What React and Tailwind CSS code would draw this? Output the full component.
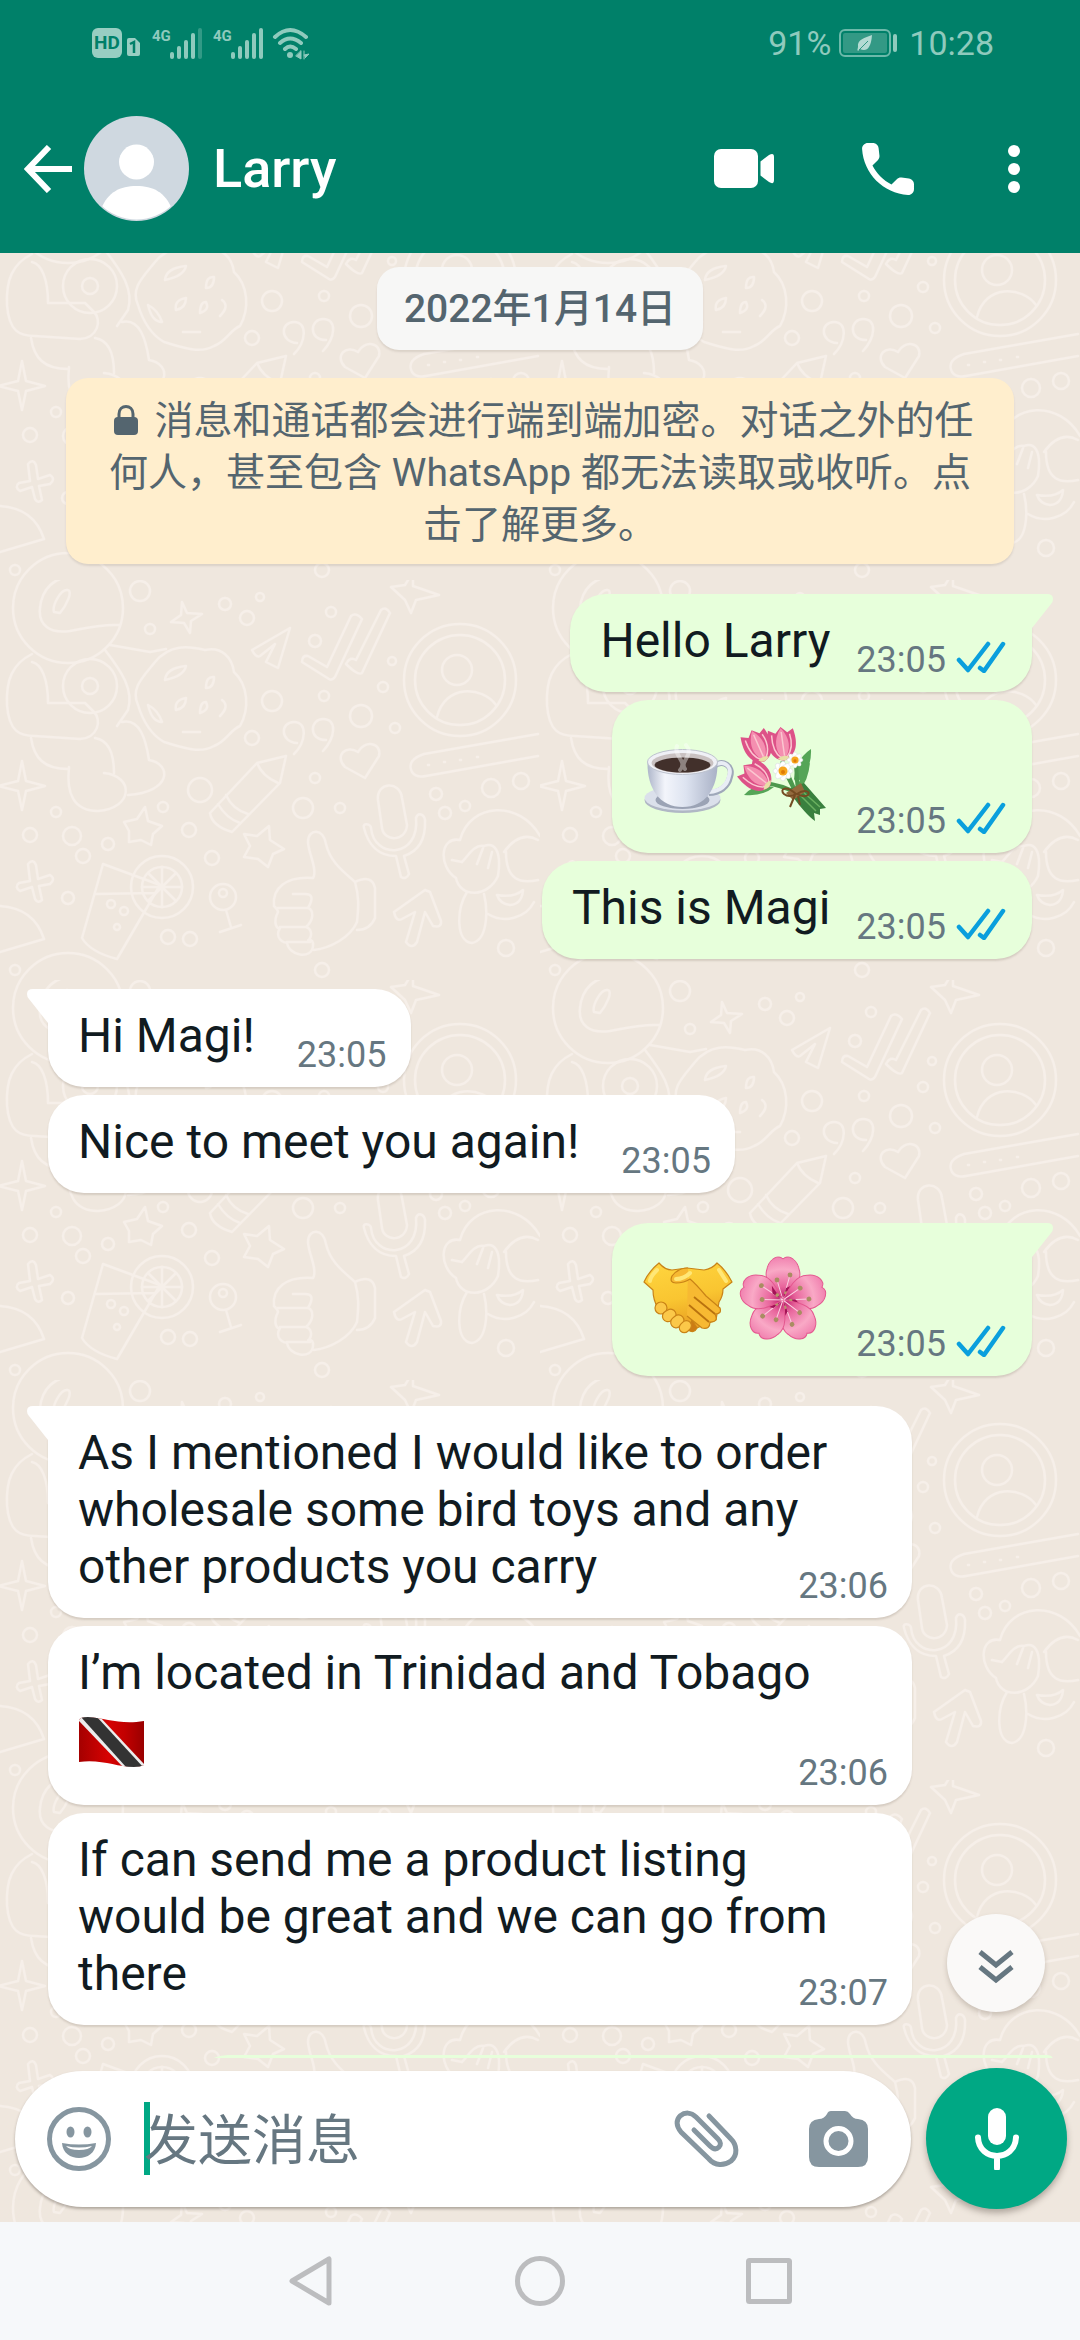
import React from 'react';

const DOTS = [
  [140, 11, 10], [150, 49, 5], [225, 24, 6], [247, 38, 7], [260, 17, 4], [331, 32, 5], [315, 61, 6],
  [392, 81, 4], [272, 121, 10], [324, 116, 5], [383, 107, 5], [361, 136, 11], [252, 158, 7],
  [395, 148, 5], [200, 210, 12], [315, 198, 5], [303, 228, 10], [340, 228, 5], [163, 227, 5],
  [56, 232, 5], [30, 255, 7], [72, 256, 9], [83, 276, 7], [108, 264, 6], [189, 250, 7],
  [212, 278, 7], [68, 318, 6], [168, 357, 7], [190, 359, 7], [436, 214, 6], [445, 233, 6],
  [491, 208, 9], [521, 201, 8], [465, 226, 5], [506, 368, 8], [322, 390, 7], [15, 390, 5],
];

// Faint line drawings behind the conversation
const Wallpaper = () => (
  <svg className="absolute inset-0 w-full h-full" aria-hidden="true">
    <defs>
      <pattern id="doodles" x="0" y="327" width="540" height="400" patternUnits="userSpaceOnUse">
        <g fill="none" stroke="#f6efe9" strokeWidth="2.5" strokeLinecap="round" strokeLinejoin="round">
          {DOTS.map(([x, y, r]) => (
            <circle key={`${x}-${y}`} cx={x} cy={y} r={r} />
          ))}
          {/* astronaut */}
          <circle cx="68" cy="28" r="55" />
          <circle cx="68" cy="428" r="55" />
          <path d="M120 45C100 44 85 48 70 51C50 54 38 45 40 28C42 8 55 -3 72 -3M54 32C52 26 60 10 67 10C74 10 66 26 60 33Z" />
          <path d="M32 74C12 84 6 100 7 125C9 152 20 156 35 156L80 159C98 158 102 140 94 132L85 123L48 123C48 100 42 84 32 82" />
          <circle cx="90" cy="106" r="27" />
          <circle cx="90" cy="106" r="8" />
          <path d="M105 70C122 92 134 110 128 130L117 146M31 158C34 178 44 189 68 189M95 158C108 160 114 172 114 193M122 142C140 138 146 160 149 180C172 184 172 212 128 215M69 187C66 214 74 231 98 231C134 228 134 196 104 193M110 65L150 72L166 69" />
          {/* cookie */}
          <path d="M155 82C170 64 188 66 205 70C222 66 232 78 234 92C248 105 250 128 240 146C230 150 226 162 214 166C200 174 184 168 164 162C150 154 142 138 138 125C130 108 144 96 155 82Z" />
          <path d="M165 100Q166 88 186 86Q184 96 165 100M176 130Q174 120 186 118Q186 128 176 130M200 133Q200 122 206 122Q210 130 200 133M206 108Q206 96 214 97Q214 108 206 108M183 152H200M148 125Q158 130 162 142Q152 142 148 125M222 120Q230 126 220 136" />
          <path d="M182 22L187 33L202 34L191 41L190 53L184 43L171 42L181 35Z" />
          <path d="M413 -8L413 6L439 15L416 20L411 33L405 20L391 7L405 5Z" />
          {/* paper plane and ticks */}
          <path d="M290 48L252 70Q256 78 260 76L275 64L266 82L278 88Z" />
          <path d="M302 82Q302 75 308 76L327 87L351 36Q356 32 362 39L335 97Q332 101 329 99ZM346 84Q350 76 356 80L381 30Q386 26 390 33L362 93Q358 96 346 84" />
          {/* contact */}
          <circle cx="460" cy="100" r="56" />
          <circle cx="460" cy="100" r="45" />
          <circle cx="457" cy="90" r="15" />
          <path d="M437 137C445 104 482 106 496 125" />
          <path d="M294 174C306 162 308 142 294 142C280 142 280 162 297 163M323 171C335 158 338 139 323 139C310 139 308 160 326 160" />
          <path d="M365 198L345 187C334 176 346 164 358 172C364 160 382 162 379 176Z" />
          <path d="M286 176L257 183L210 233Q212 246 232 252L280 203ZM257 183Q262 196 278 203M226 215Q232 229 248 234M218 224Q226 238 240 243" />
          <path d="M538 154L424 174Q406 180 412 192Q416 198 426 196L538 176M428 185h1M444 182h1M460 180h1M477 177h1" />
          {/* microphone */}
          <path d="M378 220C376 202 400 200 402 218L407 245C406 262 384 262 382 248ZM364 248C362 242 371 244 371 248C374 280 420 278 416 238C418 232 424 234 425 240C426 262 416 272 404 276L409 294Q406 300 401 297L396 276C378 276 368 264 364 248Z" />
          <path d="M145 227L148 241L162 246L153 254L151 265L141 260L129 262L129 251L124 242L137 239ZM269 246L270 260L284 269L273 274L268 287L258 279L244 277L250 266L244 254L257 256Z" />
          <path d="M22 181L26 201L45 206L26 211L22 230L18 211L-2 206L18 201Z" />
          <path d="M28 284Q33 278 36 285L38 299L50 295Q56 299 50 304L39 306L42 320Q38 324 35 319L32 307L20 311Q14 307 19 303L30 301Z" />
          {/* drink */}
          <path d="M103 284L160 305L117 379Q90 372 82 358ZM95 314L155 313" />
          <circle cx="162" cy="307" r="31" />
          <circle cx="162" cy="307" r="20" />
          <path d="M162 287V327M142 307H182M148 293L176 321M176 293L148 321" />
          <circle cx="111" cy="324" r="4" />
          <circle cx="124" cy="331" r="4" />
          <circle cx="117" cy="347" r="3" />
          <circle cx="223" cy="317" r="13" />
          <circle cx="223" cy="313" r="4" />
          <path d="M226 330L231 347M220 352L241 345" />
          {/* thumb up */}
          <path d="M313 298C318 290 308 272 308 262C308 248 324 248 326 264C330 282 344 292 355 302C360 320 358 330 357 342C350 358 330 368 314 370M313 298C286 296 272 308 274 326Q278 330 278 332C272 344 278 350 280 348C274 358 284 364 287 362C288 376 312 380 313 366C314 360 308 358 308 361C314 354 310 348 306 347C314 340 314 330 308 328C314 318 312 314 305 314H293M278 328H308M280 347H306M287 362H310M355 302Q372 294 375 308V338Q370 350 357 350" />
          <path d="M425 310L394 332Q396 342 402 339L415 332L406 362Q412 370 417 362L425 332L433 346Q442 348 441 341L430 312Z" />
          {/* monkey */}
          <path d="M460 260C470 222 520 220 540 256M460 260C440 256 438 286 456 298C460 318 488 318 498 296C502 270 494 262 484 266C474 264 468 276 462 282L452 280M506 272C506 300 520 304 538 300M504 272Q520 250 538 260M467 312C456 330 456 362 472 363C488 360 488 330 484 314M488 334C504 344 526 338 534 322M497 315Q514 318 523 310Q522 324 510 325Q500 324 497 315M483 268L477 284M492 272L488 288" />
          <path d="M0 326Q34 328 44 359L0 372" />
        </g>
      </pattern>
    </defs>
    <rect width="100%" height="100%" fill="url(#doodles)" />
  </svg>
);

const SignalBars = ({ weak }) => (
  <div className="flex h-[34px] items-start">
    <span className="w-[18px] text-[15px] font-bold leading-5">4G</span>
    <svg width="33" height="34" viewBox="0 0 33 34" fill="currentColor">
      <rect y="26" width="4" height="7" rx="2" />
      <rect x="7" y="20" width="4" height="13" rx="2" />
      <rect x="14" y="14" width="4" height="19" rx="2" />
      <rect x="21" y="7" width="4" height="26" rx="2" />
      <rect x="28" y="2" width="4" height="31" rx="2" opacity={weak ? 0.35 : 1} />
    </svg>
  </div>
);

const StatusBar = () => (
  <div className="flex h-[86px] items-center justify-between pl-[92px] pr-[86px] text-[#8fcabd]">
    <div className="flex items-center">
      <span className="flex h-[30px] w-[30px] items-center justify-center rounded-md bg-[#98cec2] text-[19px] font-bold text-[#008069]">
        HD
      </span>
      <svg className="ml-1 mt-2" width="14" height="20" viewBox="0 0 14 20">
        <path d="M3 1H9L14 6V17Q14 19 12 19H3Q1 19 1 17V3Q1 1 3 1Z" fill="#98cec2" />
        <path d="M4 7L8 5V16" fill="none" stroke="#008069" strokeWidth="2.5" />
      </svg>
      <div className="ml-3 flex gap-2.5">
        <SignalBars weak />
        <SignalBars />
      </div>
      <svg className="ml-2" width="38" height="34" viewBox="0 0 38 34" fill="none" stroke="#8fcabd" strokeWidth="4" strokeLinecap="round">
        <path d="M3 11Q18 -3 34 11M8 17Q18 8 29 17M13 23Q18 18 24 23" />
        <circle cx="18" cy="29" r="3" fill="#8fcabd" stroke="none" />
        <path d="M29 25V33L24 30ZM32 25V33M32 29L37 28L33 32" fill="#8fcabd" strokeWidth="1" />
      </svg>
    </div>
    <div className="flex items-center text-[34px] leading-10">
      <span>91%</span>
      <svg className="ml-2 mr-2.5" width="60" height="28" viewBox="0 0 60 28">
        <rect x="1" y="1" width="50" height="26" rx="5" fill="none" stroke="#6db9aa" strokeWidth="2" />
        <rect x="4" y="4" width="44" height="20" rx="2" fill="#339985" />
        <path d="M33 6C32 20 27 23 21 20L19 22Q18 21 19 18C18 10 26 9 33 6Z" fill="#b4dbd3" />
        <path d="M20 21L29 12" stroke="#339985" strokeWidth="1" />
        <rect x="54" y="5" width="4" height="18" rx="2" fill="#8fcabd" />
      </svg>
      <span>10:28</span>
    </div>
  </div>
);

const ChatHeader = () => (
  <div className="flex h-[167px] items-center pb-0.5 pl-6 pr-[60px] text-white">
    <button type="button" aria-label="返回">
      <svg width="48" height="48" viewBox="0 0 48 48" fill="none" stroke="currentColor" strokeWidth="6">
        <path d="M48 24H5M25 2L4 24L25 46" />
      </svg>
    </button>
    <svg className="ml-3" width="105" height="105" viewBox="0 0 105 105">
      <defs>
        <clipPath id="face">
          <circle cx="52.5" cy="52.5" r="51" />
        </clipPath>
      </defs>
      <circle cx="52.5" cy="52.5" r="52.5" fill="#cfd8e0" />
      <circle cx="52.5" cy="46" r="17.5" fill="#fff" />
      <path d="M17 93C24 76 36 70 52.5 70S81 76 88 93V105H17Z" fill="#fff" clipPath="url(#face)" />
    </svg>
    <h1 className="ml-6 flex-1 text-[54px] font-medium leading-[64px]">Larry</h1>
    <button type="button" aria-label="视频通话">
      <svg width="60" height="39" viewBox="0 0 60 39" fill="currentColor">
        <rect width="44" height="39" rx="7" />
        <path d="M46.5 12.5L55 6Q60 3 60 8V31Q60 36 55 33L46.5 26.5Z" />
      </svg>
    </button>
    <button type="button" className="ml-[88px]" aria-label="语音通话">
      <svg width="52" height="52" viewBox="3 3 18 18" fill="currentColor">
        <path d="M19.23 15.26l-2.54-.29c-.61-.07-1.21.14-1.64.57l-1.84 1.84c-2.83-1.44-5.15-3.75-6.59-6.59l1.85-1.85c.43-.43.64-1.03.57-1.64l-.29-2.52c-.12-1.01-.97-1.77-1.99-1.77H5.03c-1.13 0-2.07.94-2 2.07.53 8.54 7.36 15.36 15.89 15.89 1.13.07 2.07-.87 2.07-2v-1.73c.01-1.01-.75-1.86-1.76-1.98z" />
      </svg>
    </button>
    <button type="button" className="ml-[94px]" aria-label="更多选项">
      <svg width="12" height="48" viewBox="0 0 12 48" fill="currentColor">
        <circle cx="6" cy="6" r="6" />
        <circle cx="6" cy="24" r="6" />
        <circle cx="6" cy="42" r="6" />
      </svg>
    </button>
  </div>
);

const Coffee = () => (
  <svg width="94" height="94" viewBox="0 0 94 94" role="img" aria-label="coffee">
    <defs>
      <linearGradient id="cup" x1="0" x2="1">
        <stop offset="0" stopColor="#aeb6ca" />
        <stop offset="0.25" stopColor="#f3f5fb" />
        <stop offset="0.55" stopColor="#dde3f0" />
        <stop offset="1" stopColor="#a9b1c6" />
      </linearGradient>
    </defs>
    <ellipse cx="40.5" cy="73" rx="38" ry="13" fill="#b0b7c5" />
    <ellipse cx="40.5" cy="71" rx="38" ry="12.5" fill="#dbe0eb" />
    <ellipse cx="40.5" cy="73" rx="27" ry="9" fill="#9ba3b5" />
    <path d="M71 40C80 31 92 39 88 50C86 60 77 66 67 66" fill="none" stroke="#9fa8b9" strokeWidth="6" />
    <path d="M71 40C80 31 91 39 87 49C85 59 77 64 67 65" fill="none" stroke="#e9edf5" strokeWidth="4" />
    <path d="M5.5 35C5 62 18 80 40.5 80S76 62 75.5 35Z" fill="url(#cup)" />
    <ellipse cx="40.5" cy="35" rx="35" ry="12.5" fill="#f0f1f6" stroke="#bdc2ce" strokeWidth="1" />
    <ellipse cx="40.5" cy="36" rx="31" ry="10" fill="#c9c1c1" />
    <ellipse cx="40.5" cy="38" rx="28" ry="7.5" fill="#42302b" />
    <path d="M38 43C46 34 31 29 35 19M43 42C37 34 53 28 44 18" fill="none" stroke="#fff" strokeWidth="4" opacity="0.4" strokeLinecap="round" />
  </svg>
);

const Tulip = ({ transform }) => (
  <g transform={transform}>
    <path d="M0 16C-16 12 -15 -4 -12 -16L-5 -12L1 -18L7 -12L13 -15C16 -2 15 12 0 16Z" fill="#dd5288" />
    <path d="M0 15C-8 6 -8 -6 1 -17C9 -6 9 6 0 15Z" fill="#f48fb0" />
    <path d="M-9 -11C-10 0 -8 8 -2 13M9 -10C11 0 8 8 3 13M1 -13V11" fill="none" stroke="#fbc6d0" strokeWidth="1.5" />
    <path d="M-6 13Q0 9 6 13Q0 18 -6 13Z" fill="#e8dfa6" />
  </g>
);

const Daisy = ({ transform }) => (
  <g transform={transform}>
    {[0, 45, 90, 135].map((a) => (
      <ellipse key={a} rx="10" ry="4" fill="#fff" stroke="#d5d8dc" strokeWidth="0.5" transform={`rotate(${a})`} />
    ))}
    <circle r="4.5" fill="#f7a51c" />
    <circle r="2" cy="1" fill="#dd7b09" />
  </g>
);

const Bouquet = () => (
  <svg width="94" height="94" viewBox="0 0 94 94" role="img" aria-label="bouquet">
    <path d="M8 68Q18 56 38 60Q26 70 8 68ZM58 52Q60 32 75 22Q76 44 60 56ZM62 58Q68 40 74 36Q72 54 64 62Z" fill="#55a557" />
    <path d="M28 56Q46 58 60 66M46 34L60 66M52 50L60 66M60 38L62 66" fill="none" stroke="#4c984d" strokeWidth="4" />
    <path d="M54 62L68 56L90 81L84 82L84 88L78 86L79 94Q70 88 54 66Z" fill="#39803e" />
    <path d="M62 66L80 84M66 64L84 80" stroke="#6bb060" strokeWidth="1.5" />
    <Tulip transform="translate(22 20) rotate(-24)" />
    <Tulip transform="translate(46 18) rotate(-8)" />
    <Tulip transform="translate(21 50) rotate(-52)" />
    <Daisy transform="translate(47 44)" />
    <Daisy transform="translate(59 33) scale(0.8)" />
    <path d="M50 66L65 56L69 65L57 73Z" fill="#946a3d" />
    <path d="M60 67C50 58 43 62 48 67Q53 71 60 67ZM61 67C68 62 75 64 72 68Q68 71 61 67ZM59 68L54 80M62 69L64 78" fill="none" stroke="#744b22" strokeWidth="2" />
  </svg>
);

const Handshake = () => (
  <svg width="94" height="94" viewBox="0 0 94 94" role="img" aria-label="handshake">
    <defs>
      <linearGradient id="skin" x1="0" y1="0" x2="0.3" y2="1">
        <stop offset="0" stopColor="#ffd63f" />
        <stop offset="0.6" stopColor="#f9c531" />
        <stop offset="1" stopColor="#e9a022" />
      </linearGradient>
    </defs>
    <g stroke="#c98317" strokeWidth="1.2" strokeLinejoin="round">
      <path d="M17 13Q23 20 30 20L45 18L62 20Q70 19 75 13Q84 20 90 32L81 39Q81 46 77 52L74 70L50 80Q30 76 16 58Q11 50 11 40L2 32Q7 21 17 13Z" fill="url(#skin)" />
      <path d="M46 80Q52 84 55 78L50 70Z" fill="#cc7c14" />
      <rect x="13" y="52" width="12" height="12" rx="6" fill="#fbc849" />
      <rect x="20" y="60" width="14" height="11" rx="5.5" transform="rotate(-30 27 65)" fill="#fbc849" />
      <rect x="28" y="66" width="14" height="11" rx="5.5" transform="rotate(-40 35 71)" fill="#fbc849" />
      <rect x="37" y="72" width="13" height="10" rx="5" transform="rotate(-45 43 77)" fill="#fbc849" />
      <path d="M46 18Q36 18 30 26Q27 33 34 33Q42 33 48 29Q54 34 64 46L78 58Q80 64 73 64Q77 72 68 72Q68 80 60 78L45 66" fill="#f7b932" />
      <path d="M52 47L73 64M47 55L67 72" fill="none" stroke="#b9720f" strokeWidth="1.8" />
    </g>
    <path d="M15 20Q8 27 8 31M77 20L84 31M34 29Q42 29 48 23" fill="none" stroke="#ffe777" strokeWidth="4" strokeLinecap="round" />
  </svg>
);

const Blossom = () => (
  <svg width="94" height="94" viewBox="0 0 94 94" role="img" aria-label="cherry blossom">
    <defs>
      <radialGradient id="petal" gradientUnits="userSpaceOnUse" cx="0" cy="0" r="44">
        <stop offset="0" stopColor="#b51263" />
        <stop offset="0.3" stopColor="#e8659c" />
        <stop offset="0.7" stopColor="#f9a9c6" />
        <stop offset="1" stopColor="#f07fae" />
      </radialGradient>
    </defs>
    <g transform="translate(47 50)">
      {[0, 72, 144, 216, 288].map((a) => (
        <g key={a} transform={`rotate(${a})`}>
          <path d="M0 0C-10 -10 -20 -20 -16 -31C-14 -41 -5 -46 0 -41C5 -46 14 -41 16 -31C20 -20 10 -10 0 0Z" fill="url(#petal)" stroke="#e4578f" strokeWidth="1" />
          <path d="M0 0L-6 -20M0 0L7 -25" stroke="#fbd1e0" strokeWidth="1" />
          <path d="M0 -2L10 -15L3 -12Z" fill="#a31256" />
          <circle cx="-6" cy="-20" r="2.4" fill="#a98d62" />
          <circle cx="7" cy="-25" r="2.4" fill="#a98d62" />
          <circle cx="3" cy="-7" r="1.8" fill="#b59a69" />
        </g>
      ))}
    </g>
  </svg>
);

const TrinidadFlag = () => (
  <svg width="67" height="50" viewBox="0 0 67 50" role="img" aria-label="Trinidad and Tobago">
    <defs>
      <linearGradient id="cloth" x1="0" x2="1">
        <stop offset="0" stopColor="#a30000" />
        <stop offset="0.45" stopColor="#d60202" />
        <stop offset="0.7" stopColor="#c20000" />
        <stop offset="1" stopColor="#970000" />
      </linearGradient>
      <clipPath id="wave">
        <path d="M1 3Q2 0 10 0C28 1 42 8 66 4V48Q62 50 56 50C38 50 24 42 1 45Z" />
      </clipPath>
    </defs>
    <g clipPath="url(#wave)">
      <rect width="67" height="50" fill="url(#cloth)" />
      <path d="M0 0H22L67 48V50H45L0 3Z" fill="#ececec" />
      <path d="M3 0H19L65 50H48Z" fill="#333" />
    </g>
  </svg>
);

const ReadTicks = () => (
  <svg className="mb-2 ml-2.5" width="50" height="32" viewBox="0 0 50 32" fill="none" stroke="#0a9fdd" strokeWidth="4.5" strokeLinecap="round" strokeLinejoin="round">
    <path d="M3 19L12 29L32 3M24 27L28 30L47 3" />
  </svg>
);

const Tail = ({ out }) =>
  out ? (
    <svg className="absolute left-full top-0 -ml-9" width="57" height="36" viewBox="0 0 57 36">
      <path d="M0 0H51Q57 0 57 5Q57 8 55 10L36 34V36H0Z" fill="#e7ffdb" />
    </svg>
  ) : (
    <svg className="absolute right-full top-0 -mr-9" width="57" height="36" viewBox="0 0 57 36">
      <path d="M57 0H6Q0 0 0 5Q0 8 2 10L21 34V36H57Z" fill="#fff" />
    </svg>
  );

const Bubble = ({ out, tail, first, time, long, children }) => {
  const side = out ? 'self-end bg-[#e7ffdb] pr-[26px]' : 'self-start bg-white pr-6';
  const gap = first ? 'mt-[30px]' : 'mt-2';
  const shape = long ? 'grid w-[864px]' : `flex items-end ${out ? 'gap-[26px]' : 'gap-[42px]'}`;

  return (
    <div
      className={`relative max-w-full shrink-0 rounded-[36px] pb-[23px] pl-[30px] pt-[18px] shadow-[0_2px_2px_rgba(110,95,80,0.2)] ${side} ${gap} ${shape}`}
    >
      {tail && <Tail out={out} />}
      <div className="relative col-start-1 row-start-1 min-w-0">{children}</div>
      <div className="relative col-start-1 row-start-1 -mb-3 flex items-end self-end justify-self-end text-[36px] leading-[42px] text-[#667781]">
        <time>{time}</time>
        {out && <ReadTicks />}
      </div>
    </div>
  );
};

const Conversation = () => (
  <div className="relative min-h-0 flex-1">
    <div className="flex h-full flex-col overflow-hidden px-12 pt-3.5 text-[48px] leading-[57px] text-[#111b21]">
      <div className="flex h-[83px] shrink-0 items-center self-center rounded-[22px] bg-[#f7f7f6] px-[27px] text-[39px] font-medium leading-[52px] text-[#54656f] shadow-[0_2px_2px_rgba(110,95,80,0.15)]">
        2022年1月14日
      </div>
      <p className="mx-[18px] mt-7 shrink-0 rounded-[22px] bg-[#ffeecd] px-9 pb-[13px] pt-[17px] text-center text-[39px] leading-[52px] text-[#54656f] shadow-[0_2px_2px_rgba(110,95,80,0.15)]">
        <svg className="ml-2 mr-4 inline-block align-[-1px]" width="24" height="30" viewBox="0 0 24 30">
          <path d="M5 14V9C5 -1 19 -1 19 9V14" fill="none" stroke="#54656f" strokeWidth="3" />
          <rect y="12" width="24" height="18" rx="4" fill="#54656f" />
        </svg>
        消息和通话都会进行端到端加密。对话之外的任何人，甚至包含 WhatsApp 都无法读取或收听。点击了解更多。
      </p>

      <Bubble out tail first time="23:05">Hello Larry</Bubble>
      <Bubble out time="23:05">
        <div className="flex h-28 items-center">
          <Coffee />
          <Bouquet />
        </div>
      </Bubble>
      <Bubble out time="23:05">This is Magi</Bubble>

      <Bubble tail first time="23:05">Hi Magi!</Bubble>
      <Bubble time="23:05">Nice to meet you again!</Bubble>

      <Bubble out tail first time="23:05">
        <div className="flex h-28 items-center">
          <Handshake />
          <Blossom />
        </div>
      </Bubble>

      <Bubble tail first long time="23:06">
        As I mentioned I would like to order wholesale some bird toys and any other products you carry
      </Bubble>
      <Bubble long time="23:06">
        I’m located in Trinidad and Tobago
        <div className="h-[81px] pt-4">
          <TrinidadFlag />
        </div>
      </Bubble>
      <Bubble long time="23:07">
        If can send me a product listing would be great and we can go from there
      </Bubble>

      {/* next message, still below the fold */}
      <div className="relative mt-[30px] h-[98px] w-[840px] shrink-0 self-end rounded-[36px] bg-[#e7ffdb]">
        <Tail out />
      </div>
    </div>
    <button
      type="button"
      aria-label="滚动到底部"
      className="absolute bottom-[46px] right-[35px] flex h-[98px] w-[98px] items-center justify-center rounded-full bg-[#faf9f8] shadow-[0_3px_5px_rgba(90,75,60,0.25)]"
    >
      <svg className="mt-1.5" width="38" height="36" viewBox="0 0 38 36" fill="none" stroke="#667781" strokeWidth="5">
        <path d="M3 4L19 17L35 4M3 19L19 32L35 19" />
      </svg>
    </button>
  </div>
);

const Composer = () => (
  <form className="relative flex items-center gap-[15px] pb-[13px] pl-[15px] pr-[13px] pt-2.5" onSubmit={(e) => e.preventDefault()}>
    <div className="flex h-[136px] min-w-0 flex-1 items-center rounded-full bg-white pl-8 pr-[43px] text-[#8696a0] shadow-[0_2px_3px_rgba(80,70,60,0.4)]">
      <button type="button" aria-label="表情">
        <svg width="64" height="64" viewBox="0 0 64 64" fill="currentColor">
          <circle cx="32" cy="32" r="29.5" fill="none" stroke="currentColor" strokeWidth="5" />
          <ellipse cx="23.5" cy="25" rx="4" ry="5.5" />
          <ellipse cx="40.5" cy="25" rx="4" ry="5.5" />
          <path d="M15 36Q32 39 49 36C48 56 16 56 15 36ZM19 39Q22 43 32 43T45 39Q32 42 19 39Z" fillRule="evenodd" />
        </svg>
      </button>
      <span className="ml-[33px] h-[73px] w-1.5 shrink-0 bg-[#00a884]" />
      <input
        type="text"
        aria-label="发送消息"
        placeholder="发送消息"
        className="-ml-1.5 h-20 min-w-0 flex-1 bg-transparent pt-1.5 text-[54px] text-[#111b21] outline-none placeholder:text-[#667781]"
      />
      <button type="button" aria-label="附件">
        <svg width="67" height="62" viewBox="0 0 67 62" fill="none" stroke="currentColor" strokeWidth="5" strokeLinecap="round">
          <path d="M37 8L59 31C65 37 66 47 59 53C52 58 43 58 37 51L9 24C4 18 4 12 8 8C13 4 19 4 24 9L46 31C49 34 49 37 47 39C44 42 41 41 38 38L22 22" />
        </svg>
      </button>
      <button type="button" className="ml-[70px]" aria-label="相机">
        <svg width="59" height="56" viewBox="0 0 59 56" fill="currentColor">
          <path d="M22 0H36Q39 0 41 3Q44 8 49 8Q59 9 59 18V46Q59 56 49 56H10Q0 56 0 46V18Q0 9 10 8Q15 8 18 3Q19 0 22 0Z" />
          <circle cx="29.5" cy="30" r="12.5" fill="none" stroke="#fff" strokeWidth="5" />
        </svg>
      </button>
    </div>
    <button
      type="button"
      aria-label="语音消息"
      className="flex h-[141px] w-[141px] shrink-0 items-center justify-center rounded-full bg-[#00a884] shadow-[0_4px_6px_rgba(60,50,40,0.35)]"
    >
      <svg width="44" height="62" viewBox="0 0 44 62">
        <rect x="13" width="18" height="37" rx="9" fill="#fff" />
        <path d="M3 29.5C4 54 40 54 41 29.5M22 48V60" fill="none" stroke="#fff" strokeWidth="6" strokeLinecap="round" />
      </svg>
    </button>
  </form>
);

const NavBar = () => (
  <nav className="flex h-[118px] items-center justify-center gap-[181px] bg-[#f6f8fa]">
    <button type="button" aria-label="后退">
      <svg width="46" height="50" viewBox="0 0 46 50" fill="none" stroke="#bcbdbf" strokeWidth="5" strokeLinejoin="round">
        <path d="M41 3V47L4 25Z" />
      </svg>
    </button>
    <button type="button" aria-label="主屏幕">
      <svg width="50" height="50" viewBox="0 0 50 50" fill="none" stroke="#bcbdbf" strokeWidth="5">
        <circle cx="25" cy="25" r="22.5" />
      </svg>
    </button>
    <button type="button" aria-label="最近任务">
      <svg width="46" height="46" viewBox="0 0 46 46" fill="none" stroke="#bcbdbf" strokeWidth="5" strokeLinejoin="round">
        <rect x="2.5" y="2.5" width="41" height="41" rx="1" />
      </svg>
    </button>
  </nav>
);

const App = () => {
  return (
    <div className="flex h-screen flex-col font-['Roboto','Noto_Sans_CJK_SC',sans-serif]" lang="zh-CN">
      <header className="bg-[#008069]">
        <StatusBar />
        <ChatHeader />
      </header>
      <main className="relative flex min-h-0 flex-1 flex-col bg-[#efe7de]">
        <Wallpaper />
        <Conversation />
        <Composer />
      </main>
      <NavBar />
    </div>
  );
};

export default App;
